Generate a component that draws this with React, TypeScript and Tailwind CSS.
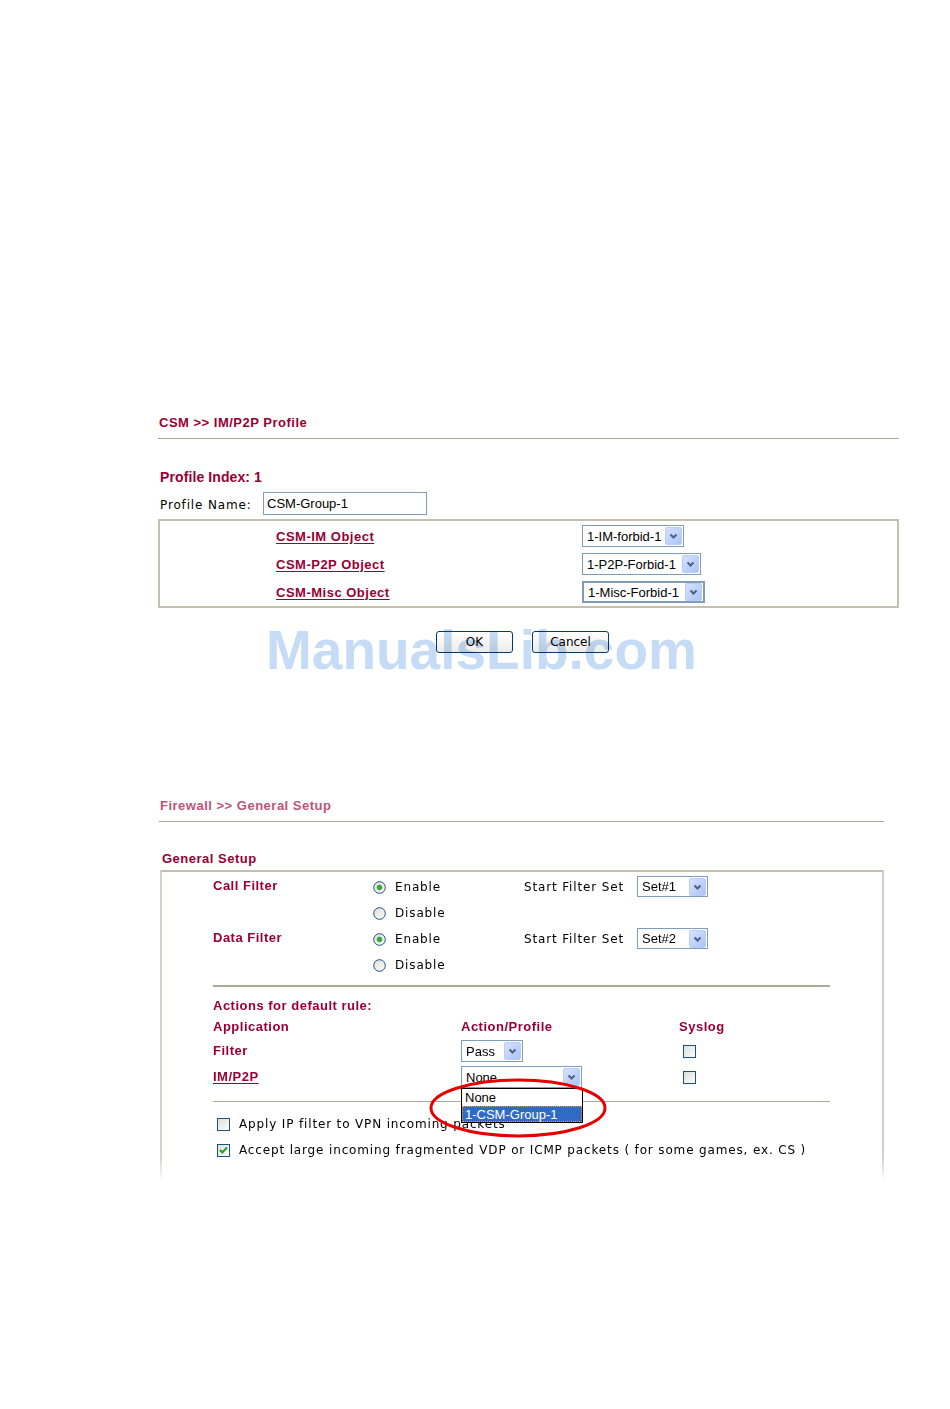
import { ReactNode } from 'react';

const maroon = 'text-[#990033]';

const Arrow = () => (
  <div className="flex h-[18px] w-[17px] items-center justify-center rounded-[2px] border border-[#b9cdf8] bg-gradient-to-br from-[#d6e2fd] to-[#adc3f6]">
    <svg width="9" height="6" viewBox="0 0 9 6">
      <path d="M1.5 1.5 L4.5 4.5 L7.5 1.5" fill="none" stroke="#4d6185" strokeWidth="2" />
    </svg>
  </div>
);

const Sel = ({ value, className }: { value: string; className: string }) => (
  <div className={`flex items-center justify-between bg-white pl-[4px] pr-[1px] font-['Liberation_Sans',Arial,sans-serif] ${className}`}>
    <span className="whitespace-nowrap text-[13px] leading-none text-black">{value}</span>
    <Arrow />
  </div>
);

const Radio = ({ on }: { on?: boolean }) => (
  <svg width="13" height="13" viewBox="0 0 13 13" className="shrink-0">
    <defs>
      <linearGradient id="rg" x1="0" y1="0" x2="1" y2="1">
        <stop offset="0" stopColor="#dcdcd6" />
        <stop offset="1" stopColor="#ffffff" />
      </linearGradient>
    </defs>
    <circle cx="6.5" cy="6.5" r="5.8" fill="url(#rg)" stroke="#1c5180" strokeWidth="1" />
    {on && <circle cx="6.5" cy="6.5" r="2.4" fill="#31b031" stroke="#1f8a1f" strokeWidth="0.6" />}
  </svg>
);

const Check = ({ on }: { on?: boolean }) => (
  <svg width="13" height="13" viewBox="0 0 13 13" className="shrink-0">
    <defs>
      <linearGradient id="cg" x1="0" y1="0" x2="1" y2="1">
        <stop offset="0" stopColor="#dcdcd6" />
        <stop offset="1" stopColor="#ffffff" />
      </linearGradient>
    </defs>
    <rect x="0.5" y="0.5" width="12" height="12" fill="url(#cg)" stroke="#1c5180" />
    {on && <path d="M3 6 L5.3 8.5 L10 3.5" fill="none" stroke="#21a121" strokeWidth="2" />}
  </svg>
);

const Btn = ({ children }: { children: ReactNode }) => (
  <div className="flex h-[22px] w-[77px] items-center justify-center rounded-[3px] border border-[#003c74] bg-gradient-to-b from-white to-[#ecebe6] font-['DejaVu_Sans',Verdana,sans-serif] text-[12px] text-black">
    {children}
  </div>
);

const Plain = ({ children, className = '' }: { children: ReactNode; className?: string }) => (
  <span className={`whitespace-nowrap font-['DejaVu_Sans',Verdana,sans-serif] text-[12px] leading-none tracking-[0.85px] text-black ${className}`}>
    {children}
  </span>
);

const Bold = ({ children, className = '' }: { children: ReactNode; className?: string }) => (
  <span className={`whitespace-nowrap text-[13px] font-bold leading-[16px] tracking-[0.5px] ${maroon} ${className}`}>
    {children}
  </span>
);

const objects = [
  { name: 'CSM-IM Object', value: '1-IM-forbid-1', w: 'w-[102px] border border-[#7f9db9] h-[22px]' },
  { name: 'CSM-P2P Object', value: '1-P2P-Forbid-1', w: 'w-[119px] border border-[#7f9db9] h-[22px]' },
  { name: 'CSM-Misc Object', value: '1-Misc-Forbid-1', w: 'w-[123px] border-2 border-[#7f9db9] h-[22px]' },
];

const filters = [
  { label: 'Call Filter', set: 'Set#1' },
  { label: 'Data Filter', set: 'Set#2' },
];

export default function App() {
  return (
    <div className="relative min-h-[1409px] w-[950px] bg-white font-['Liberation_Sans',Arial,sans-serif] leading-none">
      <div className="flex flex-col items-start pl-[158px] pt-[415px]">
        {/* CSM profile */}
        <Bold className="pl-[1px]">CSM &gt;&gt; IM/P2P Profile</Bold>
        <div className="mt-[7px] h-px w-[741px] bg-[#aca899]" />
        <div className={`mt-[30px] pl-[2px] text-[14px] font-bold leading-[17px] tracking-[0.1px] ${maroon}`}>Profile Index: 1</div>
        <div className="mt-[6px] flex h-[23px] items-center pl-[2px]">
          <Plain className="w-[103px] pt-[3px]">Profile Name:</Plain>
          <div className="flex h-[23px] w-[164px] items-center border border-[#7f9db9] pl-[3px] text-[13px] text-black">CSM-Group-1</div>
        </div>
        <div className="mt-[4px] flex w-[741px] flex-col gap-[6px] border-2 border-[#c3c0b0] pb-[3px] pt-[4px]">
          {objects.map(o => (
            <div key={o.name} className="flex h-[22px] items-center">
              <span className="w-[422px] pl-[116px]">
                <Bold className="underline underline-offset-2">{o.name}</Bold>
              </span>
              <Sel value={o.value} className={o.w} />
            </div>
          ))}
        </div>
        <div className="ml-[278px] mt-[23px] flex gap-[19px]">
          <Btn>OK</Btn>
          <Btn>Cancel</Btn>
        </div>

        {/* Firewall general setup */}
        <span className="mt-[145px] whitespace-nowrap pl-[2px] text-[13px] font-bold leading-[16px] tracking-[0.5px] text-[#bd5478]">
          Firewall &gt;&gt; General Setup
        </span>
        <div className="ml-[1px] mt-[7px] h-px w-[725px] bg-[#aca899]" />
        <Bold className="mt-[29px] pl-[4px]">General Setup</Bold>
        <div className="ml-[2px] mt-[3px] w-[724px] border-x-2 border-t-2 border-x-[#d4d0c8] border-t-[#c3c0b0] pb-[22px] pt-[2px] [mask-image:linear-gradient(to_bottom,black_92%,transparent)]">
          {filters.map(f => (
            <div key={f.label}>
              <div className="flex h-[26px] items-center pl-[51px]">
                <Bold className="w-[160px] -mt-[2px]">{f.label}</Bold>
                <div className="flex w-[151px] items-center gap-[9px]">
                  <Radio on />
                  <Plain>Enable</Plain>
                </div>
                <Plain className="w-[113px]">Start Filter Set</Plain>
                <Sel value={f.set} className="h-[21px] w-[71px] -mt-[1px] border border-[#7f9db9]" />
              </div>
              <div className="flex h-[26px] items-center pl-[211px]">
                <div className="flex items-center gap-[9px]">
                  <Radio />
                  <Plain>Disable</Plain>
                </div>
              </div>
            </div>
          ))}
          <div className="ml-[51px] mt-[7px] h-[2px] w-[617px] bg-[#aca899]" />
          <div className="mt-[11px] flex h-[16px] items-center pl-[51px]">
            <Bold>Actions for default rule:</Bold>
          </div>
          <div className="mt-[5px] flex h-[16px] items-center pl-[51px]">
            <Bold className="w-[248px]">Application</Bold>
            <Bold className="w-[218px]">Action/Profile</Bold>
            <Bold>Syslog</Bold>
          </div>
          <div className="mt-[5px] flex h-[22px] items-center pl-[51px]">
            <Bold className="w-[248px]">Filter</Bold>
            <div className="w-[218px]">
              <Sel value="Pass" className="h-[22px] w-[62px] border border-[#7f9db9]" />
            </div>
            <span className="flex pl-[4px]"><Check /></span>
          </div>
          <div className="mt-[4px] flex h-[22px] items-center pl-[51px]">
            <Bold className="w-[248px] underline underline-offset-2">IM/P2P</Bold>
            <div className="relative w-[218px]">
              <Sel value="None" className="h-[22px] w-[121px] border border-[#7f9db9]" />
              <div className="absolute left-0 top-[22px] z-10 w-[122px] border border-black bg-white text-[13px] leading-none">
                <div className="flex h-[17px] items-center pl-[3px] text-black">None</div>
                <div className="flex h-[16px] items-center border border-dotted border-[#e8a23a] bg-[#316ac5] pl-[2px] text-white">1-CSM-Group-1</div>
              </div>
            </div>
            <span className="flex pl-[4px]"><Check /></span>
          </div>
          <div className="ml-[51px] mt-[13px] h-px w-[617px] bg-[#aca899]" />
          <div className="mt-[13px] flex h-[18px] items-center gap-[9px] pl-[55px]">
            <Check />
            <Plain>Apply IP filter to VPN incoming packets</Plain>
          </div>
          <div className="mt-[8px] flex h-[18px] items-center gap-[9px] pl-[55px]">
            <Check on />
            <Plain>Accept large incoming fragmented VDP or ICMP packets ( for some games, ex. CS )</Plain>
          </div>
        </div>
      </div>

      {/* watermark */}
      <div className="pointer-events-none absolute left-[266px] top-[623px] text-[55px] font-bold leading-none text-[#c6dcf6] mix-blend-multiply">
        ManualsLib.com
      </div>

      {/* red highlight ring */}
      <svg className="pointer-events-none absolute left-[428px] top-[1077px] z-20" width="180" height="62" viewBox="0 0 180 62">
        <ellipse cx="90" cy="31" rx="87" ry="28" fill="none" stroke="#e60000" strokeWidth="3" />
      </svg>
    </div>
  );
}
